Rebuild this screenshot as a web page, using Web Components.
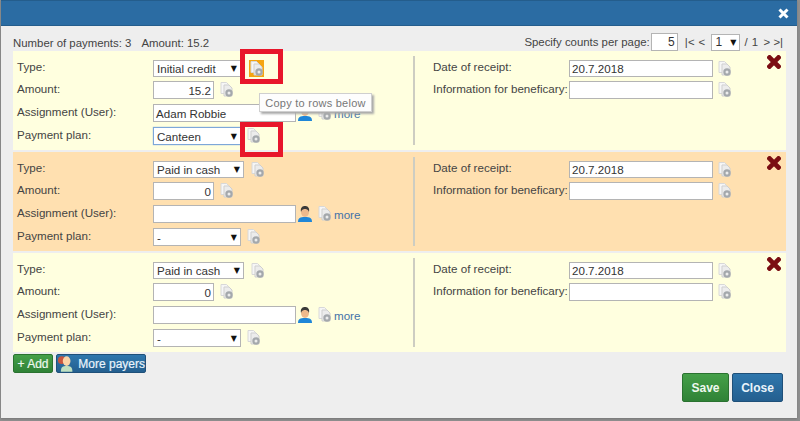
<!DOCTYPE html>
<html lang="en">
<head>
<meta charset="utf-8">
<title>Payments</title>
<style>
  html, body { margin: 0; height: 421px; overflow: hidden; background: #8f8f8f; }
  body { font: 11.6px "Liberation Sans", Arial, sans-serif; color: #444; }
</style>
</head>
<body>
<pay-dialog>
  <pay-row type="Initial credit" amount="15.2" user="Adam Robbie" plan="Canteen" date="20.7.2018" hot></pay-row>
  <pay-row tone="orange" type="Paid in cash" amount="0" plan="-" date="20.7.2018"></pay-row>
  <pay-row type="Paid in cash" amount="0" plan="-" date="20.7.2018"></pay-row>
</pay-dialog>

<script>
// Small grey "copy" icon, two sheets with a disc
class CopyIcon extends HTMLElement {
  constructor() {
    super();
    this.attachShadow({ mode: 'open' });
    this.shadowRoot.innerHTML = `
      <style>
        :host { display: inline-flex; width: 15px; height: 17px; align-items: center; justify-content: center; flex: none; }
        :host([hot]) { background: #f5a511; }
        svg { display: block; }
      </style>
      <svg width="14" height="16" viewBox="0 0 14 16">
        <path d="M1 .5h5.500l2 2v9H1z" fill="#f6f6f6" stroke="#d8d8d8"/>
        <path d="M4 3h5l3 3v8H4z" fill="#ececec" stroke="#cfcfcf"/>
        <circle cx="9" cy="11" r="3.700" fill="#a4a8ac"/>
        <circle cx="9" cy="11" r="1.500" fill="#ececec"/>
      </svg>`;
  }
}

class UserIcon extends HTMLElement {
  constructor() {
    super();
    this.attachShadow({ mode: 'open' });
    this.shadowRoot.innerHTML = `
      <style>
        :host { display: inline-block; width: 14px; height: 16px; flex: none; }
        svg { display: block; }
      </style>
      <svg width="14" height="16" viewBox="0 0 14 16">
        <path d="M0 16c0-4 2-5 7-5s7 1 7 5z" fill="#1f86d8"/>
        <ellipse cx="7" cy="6" rx="4" ry="5" fill="#eeb98c"/>
        <path d="M3 6C2 1 5 0 7 0s5 1 4 6C10 3 8 3 7 3S4 3 3 6z" fill="#3a3a3a"/>
      </svg>`;
  }
}

class RedCross extends HTMLElement {
  constructor() {
    super();
    this.attachShadow({ mode: 'open' });
    this.shadowRoot.innerHTML = `
      <style>
        :host { display: block; width: 14px; height: 14px; }
        svg { display: block; }
      </style>
      <svg width="14" height="14" viewBox="0 0 14 14">
        <path d="M2.500 2.500l9 9m0-9l-9 9" stroke="#7b0d12" stroke-width="4.600" stroke-linecap="square"/>
      </svg>`;
  }
}

// Fake select box, the arrow is a glyph so it looks like the old browser one
class PaySelect extends HTMLElement {
  constructor() {
    super();
    this.attachShadow({ mode: 'open' });
    this.shadowRoot.innerHTML = `
      <style>
        :host {
          display: flex; box-sizing: border-box; height: 100%; align-items: center; justify-content: space-between;
          padding: 0 3px; background: #fff; border: 1px solid #b4b4b4; color: #333; flex: none;
        }
        :host([focus]) { border-color: #7da7d9; box-shadow: 0 0 1px #7da7d9; }
        i { font: 8px "DejaVu Sans", sans-serif; color: #111; }
      </style>
      <slot></slot><i>▼</i>`;
  }
}

class PayInput extends HTMLElement {
  constructor() {
    super();
    this.attachShadow({ mode: 'open' });
    this.shadowRoot.innerHTML = `
      <style>
        :host {
          display: flex; box-sizing: border-box; height: 100%; align-items: center;
          padding: 0 2px; background: #fff; border: 1px solid #b4b4b4; color: #333; flex: none;
        }
        :host([right]) { justify-content: flex-end; }
      </style>
      <slot></slot>`;
  }
}

class PayField extends HTMLElement {
  constructor() {
    super();
    this.attachShadow({ mode: 'open' });
    this.shadowRoot.innerHTML = `
      <style>
        :host { display: flex; height: 18px; align-items: center; gap: 4px; }
        span { flex: none; position: relative; top: -2px; color: #444; white-space: nowrap; }
      </style>
      <span></span><slot></slot>`;
  }
  connectedCallback() {
    const s = this.shadowRoot.querySelector('span');
    s.textContent = this.getAttribute('label');
    s.style.width = this.getAttribute('w') + 'px';
  }
}

class PayRow extends HTMLElement {
  constructor() {
    super();
    this.attachShadow({ mode: 'open' });
  }
  connectedCallback() {
    const a = n => this.getAttribute(n) || '';
    const typeW = a('type') === 'Paid in cash' ? 91 : 88;
    const typeGap = a('type') === 'Paid in cash' ? 2 : 4;
    const focus = a('plan') === 'Canteen' ? 'focus' : '';
    this.shadowRoot.innerHTML = `
      <style>
        :host {
          display: grid; grid-template-columns: 400px 1fr; height: 99px; box-sizing: border-box;
          background: #ffffdf; position: relative;
        }
        :host([tone=orange]) { background: #ffe0b0; }
        .col { padding-top: 9px; display: flex; flex-direction: column; gap: 5px; }
        .col.left { padding-left: 4px; }
        .col.right { margin: 5px 0 5px; padding: 4px 0 0 18px; border-left: 2px solid #cdcdc2; }
        .col pay-field:first-child { height: 17px; margin-bottom: -1px; }
        a { color: #4372a8; }
        red-cross { position: absolute; top: 4px; right: 5px; }
      </style>
      <div class="col left">
        <pay-field label="Type:" w="132">
          <pay-select style="width:${typeW}px">${a('type')}</pay-select><copy-icon style="margin-left:${typeGap}px" ${this.hasAttribute('hot') ? 'hot' : ''}></copy-icon>
        </pay-field>
        <pay-field label="Amount:" w="132">
          <pay-input right style="width:61px">${a('amount')}</pay-input><copy-icon style="margin-left:1px"></copy-icon>
        </pay-field>
        <pay-field label="Assignment (User):" w="132">
          <pay-input style="width:143px">${a('user')}</pay-input>
          <user-icon style="margin-left:-2px"></user-icon><copy-icon style="margin-left:1px"></copy-icon><a style="margin-left:-2px">more</a>
        </pay-field>
        <pay-field label="Payment plan:" w="132">
          <pay-select ${focus} style="width:88px">${a('plan')}</pay-select><copy-icon style="margin-left:1px"></copy-icon>
        </pay-field>
      </div>
      <div class="col right">
        <pay-field label="Date of receipt:" w="132">
          <pay-input style="width:144px">${a('date')}</pay-input><copy-icon></copy-icon>
        </pay-field>
        <pay-field label="Information for beneficary:" w="132">
          <pay-input style="width:144px"></pay-input><copy-icon></copy-icon>
        </pay-field>
      </div>
      <red-cross></red-cross>`;
  }
}

class PayButton extends HTMLElement {
  constructor() {
    super();
    this.attachShadow({ mode: 'open' });
    this.shadowRoot.innerHTML = `
      <style>
        :host {
          display: inline-flex; align-items: center; justify-content: center; box-sizing: border-box; gap: 3px;
          border-radius: 2px; color: #e9f3fb; font-size: 12px; white-space: nowrap; -webkit-text-stroke: .2px;
          background: linear-gradient(#2f77ad, #245f8f); border: 1px solid #1f5079;
        }
        :host([green]) { background: linear-gradient(#45a049, #2f8236); border-color: #2a7230; color: #eef8ee; }
        ::slotted(svg) { display: block; }
      </style>
      <slot></slot>`;
  }
}

class PayDialog extends HTMLElement {
  constructor() {
    super();
    this.attachShadow({ mode: 'open' });
    this.shadowRoot.innerHTML = `
      <style>
        :host {
          display: flex; flex-direction: column; box-sizing: border-box; width: 796px; height: 418px; margin-left: 1px;
          background: #eee; position: relative; box-shadow: 0 1px 2px #777; color: #444;
        }
        .head {
          flex: none; height: 26px; display: flex; justify-content: flex-end; align-items: center; padding-right: 8px;
          background: #2b6ca3; border-top: 1px solid #245d8c; border-bottom: 1px solid #245d8c; box-sizing: border-box;
        }
        .bar {
          flex: none; height: 25px; padding: 0 14px 0 12px; display: flex; align-items: flex-end; justify-content: space-between;
          font-size: 11.4px;
        }
        .bar .pager, .bar .sum { display: flex; align-items: center; }
        .sum { margin-bottom: 2px; }
        .sum span + span { margin-left: 10px; }
        .pager pay-input { width: 27px; height: 18px; margin-left: 1px; font-size: 12px; }
        .pager pay-select { width: 29px; height: 17px; margin: 0 4px 0 6px; font-size: 12px; }
        .nav { margin-left: 7px; letter-spacing: .3px; }
        .nav.end { margin-left: 5px; letter-spacing: 0; }
        .of { letter-spacing: .5px; }
        .rows { margin: 0 11px 0 12px; display: flex; flex-direction: column; gap: 2px; }
        .add { flex: none; padding: 2px 0 0 12px; display: flex; gap: 3px; }
        .add pay-button { height: 19px; }
        .foot { flex: 1; display: flex; justify-content: flex-end; gap: 3px; padding: 0 14px 16px 0; align-items: flex-end; }
        .foot pay-button { height: 29px; font-weight: bold; -webkit-text-stroke: 0; }
        .mark { position: absolute; box-sizing: border-box; left: 239px; width: 43px; height: 35px; border: 5px solid #e8162b; }
        .tip {
          position: absolute; left: 258px; top: 93px; width: 113px; height: 19px; box-sizing: border-box;
          display: flex; align-items: center; justify-content: center; font-size: 11px; letter-spacing: .25px;
          background: #fdfdfd; border: 1px solid #cfcfcf; color: #777; box-shadow: 2px 2px 2px #aaa;
        }
      </style>
      <div class="head">
        <svg width="11" height="11" viewBox="0 0 11 11"><path d="M1.500 1.500l8 8m0-8l-8 8" stroke="#fff" stroke-width="3"/></svg>
      </div>
      <div class="bar">
        <div class="sum"><span>Number of payments: 3</span><span>Amount: 15.2</span></div>
        <div class="pager">Specify counts per page:<pay-input right>5</pay-input>
          <span class="nav">|&lt; &lt;</span><pay-select>1</pay-select><span class="of">/ 1</span><span class="nav end">&gt; &gt;|</span>
        </div>
      </div>
      <div class="rows"><slot></slot></div>
      <div class="add">
        <pay-button green style="width:40px">+ Add</pay-button>
        <pay-button style="width:90px">
          <svg width="19" height="17" viewBox="0 0 19 17">
            <circle cx="5" cy="5" r="4" fill="#c8563f"/>
            <path d="M4 17c0-5 2-6 6-6s6 1 6 6z" fill="#bfe0c0"/>
            <ellipse cx="10" cy="6" rx="4" ry="5" fill="#fbd3a6"/>
          </svg>More payers
        </pay-button>
      </div>
      <div class="foot">
        <pay-button green style="width:47px">Save</pay-button>
        <pay-button style="width:51px">Close</pay-button>
      </div>
      <div class="mark" style="top:49px"></div>
      <div class="mark" style="top:122px"></div>
      <div class="tip">Copy to rows below</div>`;
  }
}

customElements.define('copy-icon', CopyIcon);
customElements.define('user-icon', UserIcon);
customElements.define('red-cross', RedCross);
customElements.define('pay-select', PaySelect);
customElements.define('pay-input', PayInput);
customElements.define('pay-field', PayField);
customElements.define('pay-row', PayRow);
customElements.define('pay-button', PayButton);
customElements.define('pay-dialog', PayDialog);
</script>
</body>
</html>
